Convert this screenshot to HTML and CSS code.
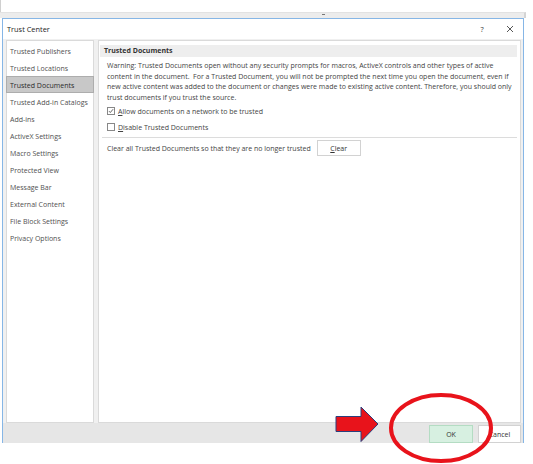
FILE: index.html
```html
<!DOCTYPE html>
<html>
<head>
<meta charset="utf-8">
<link rel="stylesheet" href="styles.css">
</head>
<body>
<div class="screen">
  <div class="top-gap"></div>
  <div class="behind"><span class="behind-mark"></span></div>
  <div class="dialog">
    <div class="titlebar">
      <span class="title">Trust Center</span>
      <span class="tb-help">?</span>
      <span class="tb-close"><svg viewBox="0 0 8 8" width="8" height="8"><path d="M1 1 L7 7 M7 1 L1 7" stroke="#444" stroke-width="0.9" fill="none"/></svg></span>
    </div>
    <div class="body">
      <div class="nav">
        <div class="nav-item">Trusted Publishers</div>
        <div class="nav-item">Trusted Locations</div>
        <div class="nav-item selected">Trusted Documents</div>
        <div class="nav-item">Trusted Add-in Catalogs</div>
        <div class="nav-item">Add-ins</div>
        <div class="nav-item">ActiveX Settings</div>
        <div class="nav-item">Macro Settings</div>
        <div class="nav-item">Protected View</div>
        <div class="nav-item">Message Bar</div>
        <div class="nav-item">External Content</div>
        <div class="nav-item">File Block Settings</div>
        <div class="nav-item">Privacy Options</div>
      </div>
      <div class="content">
        <div class="section-head">Trusted Documents</div>
        <div class="warning">Warning: Trusted Documents open without any security prompts for macros, ActiveX controls and other types of active<br>content in the document.&nbsp; For a Trusted Document, you will not be prompted the next time you open the document, even if<br>new active content was added to the document or changes were made to existing active content. Therefore, you should only<br>trust documents if you trust the source.</div>
        <label class="check-row first"><span class="box"><svg viewBox="0 0 8 8" width="8" height="8"><path d="M1.3 4.2 L3.1 6 L6.8 1.6" fill="none" stroke="#333" stroke-width="1"/></svg></span><span><u>A</u>llow documents on a network to be trusted</span></label>
        <label class="check-row"><span class="box"></span><span><u>D</u>isable Trusted Documents</span></label>
        <div class="sep"></div>
        <div class="clear-row">
          <span>Clear all Trusted Documents so that they are no longer trusted</span>
          <span class="btn clear-btn"><u>C</u>lear</span>
        </div>
      </div>
    </div>
    <div class="footer">
      <span class="btn ok-btn">OK</span>
      <span class="btn cancel-btn">Cancel</span>
    </div>
  </div>
  <svg class="overlay" width="533" height="464" viewBox="0 0 533 464">
    <polygon points="336,416.5 361,416.5 361,407 378,424 361,441.5 361,431.5 336,431.5" fill="#e8131b" stroke="#2b3f7c" stroke-width="1"/>
    <ellipse cx="441" cy="428" rx="50" ry="33" fill="none" stroke="#e8131b" stroke-width="4"/>
  </svg>
</div>
</body>
</html>
```
FILE: styles.css
```css
* { box-sizing: border-box; }
html, body { margin: 0; padding: 0; background: #fff; }
body {
  width: 533px; height: 464px; overflow: hidden;
  font-family: "Open Sans", "Noto Sans", sans-serif;
  font-size: 7px; color: #444;
}
.screen { position: relative; width: 533px; height: 464px; }
.top-gap { height: 12px; border-left: 1px solid #d0d0d0; }
.behind {
  position: relative;
  height: 6px; width: 526px;
  background: #ececec;
  border-right: 2px solid #d4d4d4;
  border-top: 1px solid #e2e2e2;
}
.behind-mark { position: absolute; left: 322px; top: 1px; width: 3px; height: 1px; background: #777; }
.dialog {
  margin-left: 2px; width: 522px; height: 425px;
  border: 1px solid #86b6e6; border-bottom: none;
  display: flex; flex-direction: column;
  background: #f0f0f0;
}
.titlebar {
  height: 20px; background: #fff;
  display: flex; align-items: center;
  font-size: 7.4px; color: #1e1e1e;
}
.title { padding-left: 4px; flex: 1; }
.tb-help { width: 10px; margin-right: 18px; text-align: center; color: #333; }
.tb-close { width: 10px; margin-right: 8px; display: flex; justify-content: center; }
.tb-close svg { display: block; }
.body {
  flex: 1; display: flex; gap: 4px;
  padding: 1px 2px 0 3px;
}
.nav {
  width: 88px; background: #fff;
  border: 1px solid #dadada;
  padding-top: 1px;
}
.nav-item {
  height: 17px; line-height: 17px;
  padding-left: 3px; white-space: nowrap;
  color: #505050; border: 1px solid transparent;
  margin: 0 -1px;
}
.nav-item.selected { background: #c8c8c8; border-color: #adadad; color: #2a2a2a; }
.content {
  flex: 1; background: #fff;
  border: 1px solid #dadada;
  padding: 4px 3px 0 1px;
}
.section-head {
  height: 12px; line-height: 12px;
  background: #eeeeee;
  font-weight: bold; color: #333;
  padding-left: 4px;
}
.warning {
  margin-top: 4px; padding-left: 7px;
  line-height: 10.5px; white-space: nowrap;
}
.check-row {
  display: flex; align-items: center; gap: 3px;
  height: 16px; padding-left: 7px;
}
.check-row.first { margin-top: 0; }
.box {
  width: 8px; height: 8px; border: 1px solid #888; background: #fff;
  display: flex; align-items: center; justify-content: center;
}
.box svg { display: block; }
.sep { height: 1px; background: #dcdcdc; margin: 2px 0 0 2px; }
.clear-row {
  display: flex; align-items: center;
  padding-left: 7px; margin-top: 2px; height: 16px;
}
.btn {
  display: flex; align-items: center; justify-content: center;
  background: #fff; border: 1px solid #d2d2d2; color: #333;
}
.clear-btn { width: 44px; height: 16px; margin-left: 6px; }
.footer {
  height: 20px; background: #e6e6e6;
  display: flex; align-items: flex-end; justify-content: flex-end;
  padding-right: 2px; gap: 5px;
}
.ok-btn { width: 44px; height: 18px; background: #d7f0e1; border-color: #b4dcc3; }
.cancel-btn { width: 43px; height: 18px; }
.overlay { position: absolute; left: 0; top: 0; pointer-events: none; }
```
